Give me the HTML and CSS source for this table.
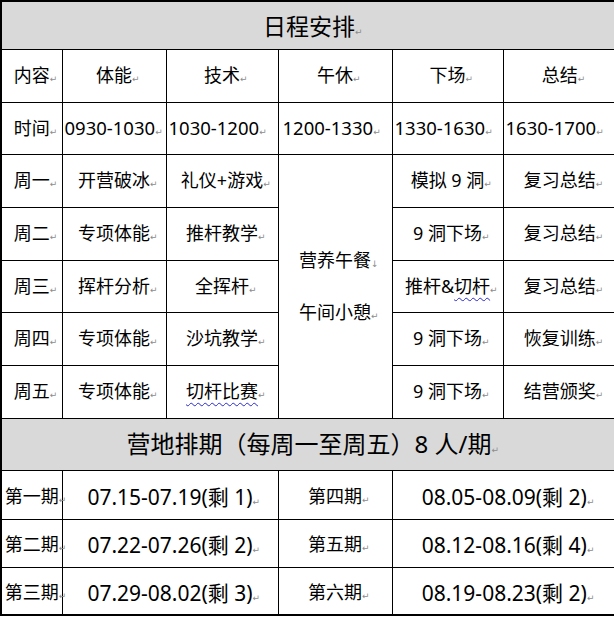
FILE: index.html
```html
<!DOCTYPE html>
<html lang="zh-CN">
<head>
<meta charset="utf-8">
<title>日程安排</title>
<link rel="stylesheet" href="styles.css">
</head>
<body>
<table class="sched">
  <colgroup>
    <col class="c1"><col class="c2"><col class="c3"><col class="c4"><col class="c5"><col class="c6">
  </colgroup>
  <tr class="r-title">
    <td colspan="6" class="title">日程安排<span class="pm">↵</span></td>
  </tr>
  <tr class="r-head">
    <td>内容<span class="pm">↵</span></td>
    <td>体能<span class="pm">↵</span></td>
    <td>技术<span class="pm">↵</span></td>
    <td>午休<span class="pm">↵</span></td>
    <td>下场<span class="pm">↵</span></td>
    <td>总结<span class="pm">↵</span></td>
  </tr>
  <tr class="r-time">
    <td class="tlabel">时间<span class="pm">↵</span></td>
    <td>0930-1030<span class="pm">↵</span></td>
    <td>1030-1200<span class="pm">↵</span></td>
    <td class="tpad">1200-1330<span class="pm">↵</span></td>
    <td>1330-1630<span class="pm">↵</span></td>
    <td>1630-1700<span class="pm">↵</span></td>
  </tr>
  <tr class="r-day">
    <td>周一<span class="pm">↵</span></td>
    <td>开营破冰<span class="pm">↵</span></td>
    <td>礼仪+游戏<span class="pm">↵</span></td>
    <td rowspan="5" class="lunch">
      <div class="lline">营养午餐<span class="pm">↓</span></div>
      <div class="lline">午间小憩<span class="pm">↵</span></div>
    </td>
    <td>模拟 9 洞<span class="pm">↵</span></td>
    <td>复习总结<span class="pm">↵</span></td>
  </tr>
  <tr class="r-day">
    <td>周二<span class="pm">↵</span></td>
    <td>专项体能<span class="pm">↵</span></td>
    <td>推杆教学<span class="pm">↵</span></td>
    <td>9 洞下场<span class="pm">↵</span></td>
    <td>复习总结<span class="pm">↵</span></td>
  </tr>
  <tr class="r-day r-day-short">
    <td>周三<span class="pm">↵</span></td>
    <td>挥杆分析<span class="pm">↵</span></td>
    <td>全挥杆<span class="pm">↵</span></td>
    <td>推杆&amp;<span class="wavy">切杆</span><span class="pm">↵</span></td>
    <td>复习总结<span class="pm">↵</span></td>
  </tr>
  <tr class="r-day">
    <td>周四<span class="pm">↵</span></td>
    <td>专项体能<span class="pm">↵</span></td>
    <td>沙坑教学<span class="pm">↵</span></td>
    <td>9 洞下场<span class="pm">↵</span></td>
    <td>恢复训练<span class="pm">↵</span></td>
  </tr>
  <tr class="r-day">
    <td>周五<span class="pm">↵</span></td>
    <td>专项体能<span class="pm">↵</span></td>
    <td><span class="wavy">切杆比赛</span><span class="pm">↵</span></td>
    <td>9 洞下场<span class="pm">↵</span></td>
    <td>结营颁奖<span class="pm">↵</span></td>
  </tr>
  <tr class="r-title2">
    <td colspan="6" class="title title2">营地排期（每周一至周五）8 人/期<span class="pm">↵</span></td>
  </tr>
  <tr class="r-p1">
    <td class="plabel">第一期<span class="pm">↵</span></td>
    <td colspan="2" class="date">07.15-07.19(剩 1)<span class="pm">↵</span></td>
    <td class="plabel">第四期<span class="pm">↵</span></td>
    <td colspan="2" class="date">08.05-08.09(剩 2)<span class="pm">↵</span></td>
  </tr>
  <tr class="r-p">
    <td class="plabel">第二期<span class="pm">↵</span></td>
    <td colspan="2" class="date">07.22-07.26(剩 2)<span class="pm">↵</span></td>
    <td class="plabel">第五期<span class="pm">↵</span></td>
    <td colspan="2" class="date">08.12-08.16(剩 4)<span class="pm">↵</span></td>
  </tr>
  <tr class="r-p">
    <td class="plabel">第三期<span class="pm">↵</span></td>
    <td colspan="2" class="date">07.29-08.02(剩 3)<span class="pm">↵</span></td>
    <td class="plabel">第六期<span class="pm">↵</span></td>
    <td colspan="2" class="date">08.19-08.23(剩 2)<span class="pm">↵</span></td>
  </tr>
</table>
</body>
</html>
```

FILE: styles.css
```css
html, body {
  margin: 0;
  padding: 0;
  background: #ffffff;
  overflow: hidden;
}

body {
  font-family: "Noto Sans", "Noto Sans CJK SC", sans-serif;
  color: #000000;
}

.sched {
  border-collapse: collapse;
  table-layout: fixed;
  width: 616px;
  margin: 0;
  border: 2px solid #000000;
}

.c1 { width: 61px; }
.c2 { width: 104px; }
.c3 { width: 112px; }
.c4 { width: 114px; }
.c5 { width: 111px; }
.c6 { width: 114px; }

.sched td {
  border: 1px solid #000000;
  padding: 3px 0 0 0;
  text-align: center;
  vertical-align: middle;
  font-size: 18px;
  line-height: 24px;
  white-space: nowrap;
  overflow: visible;
}

.r-title { height: 48px; }
.r-head { height: 53px; }
.r-time { height: 52px; }
.r-day { height: 53px; }
.r-day-short { height: 52px; }
.r-title2 { height: 52px; }
.r-p1 { height: 49px; }
.r-p { height: 48px; }

.r-time td {
  text-align: left;
  padding-left: 2px;
  font-size: 18.5px;
}

.r-time td.tlabel {
  text-align: center;
  padding-left: 0;
  font-size: 18px;
}

.r-time td.tpad {
  padding-left: 4px;
}

.sched td.title {
  background: #d9d9d9;
  font-size: 23px;
  line-height: 30px;
  padding-top: 7px;
}

.sched td.title2 {
  font-size: 24px;
  padding-top: 5px;
}

.sched td.date {
  font-size: 21px;
  padding-top: 9px;
}

.sched td.plabel {
  padding-top: 6px;
}

.lline {
  line-height: 48px;
}

.pm {
  display: inline-block;
  width: 0;
  font-family: "DejaVu Sans", sans-serif;
  font-size: 9px;
  color: #8c8c8c;
  text-align: left;
  vertical-align: baseline;
}

.wavy {
  text-decoration: underline wavy #2a2ad0;
  text-decoration-thickness: 1px;
  text-underline-offset: 4px;
}
```
